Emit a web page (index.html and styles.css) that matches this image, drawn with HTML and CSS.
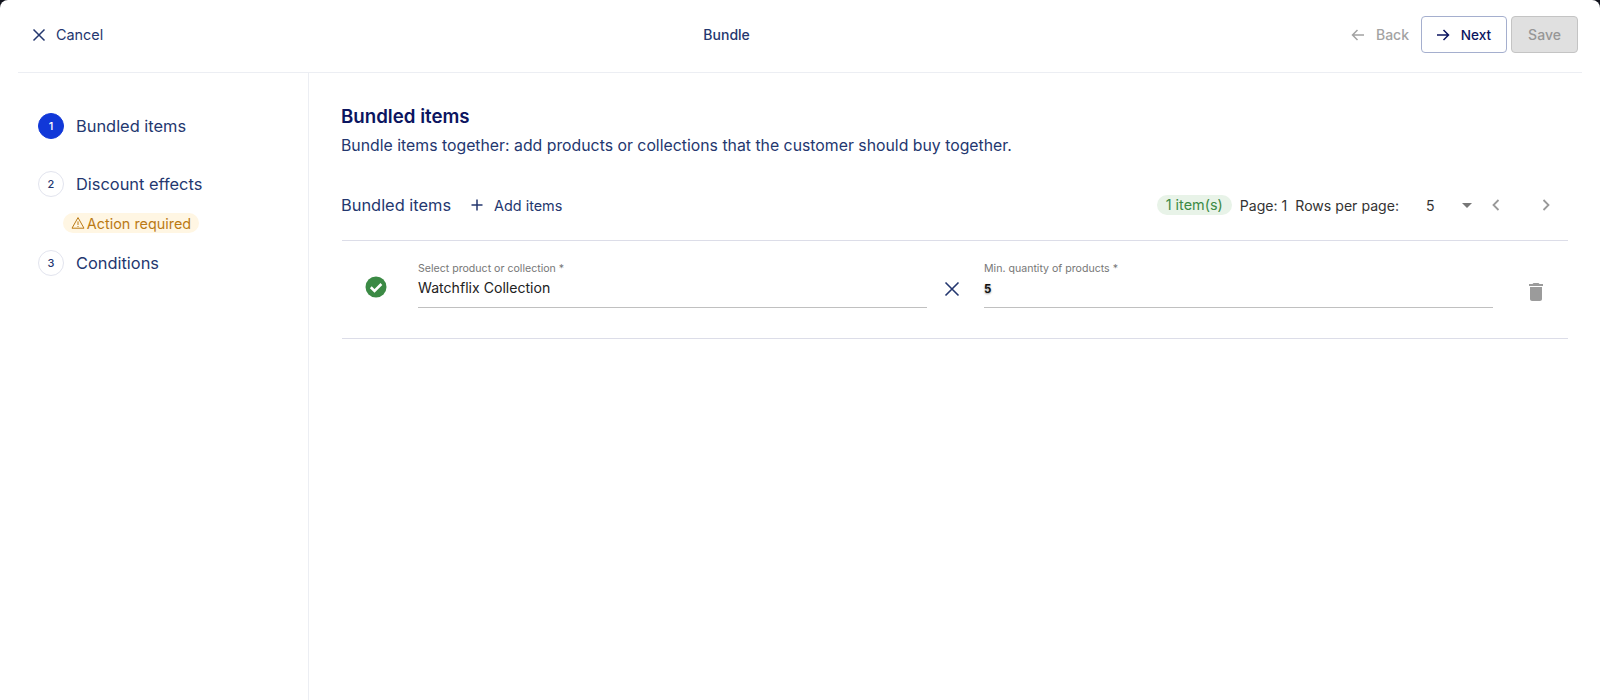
FILE: index.html
```html
<!DOCTYPE html>
<html lang="en">
<head>
  <meta charset="UTF-8">
  <meta name="viewport" content="width=device-width, initial-scale=1.0">
  <title>Bundle</title>
  <link rel="stylesheet" href="styles.css">
</head>
<body>
  <header class="topbar">
    <button class="text-btn cancel-btn">
      <svg class="icon-16" viewBox="0 0 16 16"><path d="M2.5 2.5l11 11M13.5 2.5l-11 11"/></svg>
      Cancel
    </button>
    <div class="topbar-title">Bundle</div>
    <div class="topbar-actions">
      <button class="text-btn back-btn">
        <svg class="icon-16" viewBox="0 0 16 16"><path d="M14 8H2.5M7.5 3l-5 5 5 5"/></svg>
        Back
      </button>
      <button class="next-btn">
        <svg class="icon-16" viewBox="0 0 16 16"><path d="M2 8h11.5M8.5 3l5 5-5 5"/></svg>
        Next
      </button>
      <button class="save-btn">Save</button>
    </div>
  </header>

  <div class="content">
    <nav class="steps">
      <div class="step step-active">
        <span class="step-num">1</span>
        <span class="step-label">Bundled items</span>
      </div>
      <div class="step">
        <span class="step-num">2</span>
        <span class="step-label">Discount effects</span>
      </div>
      <div class="warn-chip">
        <svg class="warn-icon" viewBox="0 0 14 14"><path d="M7 1.6L13 12.2H1z"/><path d="M7 5.4v3.6M7 10v1"/></svg>
        Action required
      </div>
      <div class="step">
        <span class="step-num">3</span>
        <span class="step-label">Conditions</span>
      </div>
    </nav>

    <main class="panel">
      <h2>Bundled items</h2>
      <p class="intro">Bundle items together: add products or collections that the customer should buy together.</p>

      <div class="list-head">
        <span class="list-title">Bundled items</span>
        <button class="text-btn add-btn">
          <svg class="icon-14" viewBox="0 0 14 14"><path d="M7 1.5v11M1.5 7h11"/></svg>
          Add items
        </button>
        <div class="pager">
          <span class="count-chip">1 item(s)</span>
          <span class="page-no">Page: 1</span>
          <span>Rows per page:</span>
          <span class="rows-value">5</span>
          <span class="caret"></span>
          <svg class="chevron chevron-prev" viewBox="0 0 10 14"><path d="M7.5 2L2.5 7l5 5"/></svg>
          <svg class="chevron" viewBox="0 0 10 14"><path d="M2.5 2l5 5-5 5"/></svg>
        </div>
      </div>

      <div class="item-row">
        <svg class="ok-icon" viewBox="0 0 22 22"><circle cx="11" cy="11" r="10.5"/><path d="M5.8 11.3l3.7 3.6L16.4 8"/></svg>
        <div class="field">
          <label>Select product or collection *</label>
          <div class="field-value">Watchflix Collection</div>
        </div>
        <svg class="clear-icon" viewBox="0 0 16 16"><path d="M1.5 1.5l13 13M14.5 1.5l-13 13"/></svg>
        <div class="field">
          <label>Min. quantity of products *</label>
          <div class="field-value"><span class="qty">5</span></div>
        </div>
        <svg class="trash-icon" viewBox="0 0 24 24"><path d="M6 19c0 1.1.9 2 2 2h8c1.1 0 2-.9 2-2V7H6v12zM19 4h-3.5l-1-1h-5l-1 1H5v2h14V4z"/></svg>
      </div>
    </main>
  </div>
</body>
</html>
```

FILE: styles.css
```css
* {
  box-sizing: border-box;
}
html {
  height: 100%;
  background: #11131c;
}
body {
  height: 100%;
  margin: 0;
  background: #fff;
  border-radius: 8px 8px 0 0;
  color: #24376f;
  font-family: Inter, "Liberation Sans", sans-serif;
  font-size: 14px;
  overflow: hidden;
  display: flex;
  flex-direction: column;
}
button {
  font-family: inherit;
  font-size: 14px;
  font-weight: 500;
  cursor: pointer;
}
svg {
  display: block;
  fill: none;
  stroke: currentColor;
  flex: none;
}
.icon-16 {
  width: 16px;
  height: 16px;
  stroke-width: 1.5;
}
.icon-14 {
  width: 14px;
  height: 14px;
  stroke-width: 1.5;
}

.topbar {
  height: 73px;
  flex: none;
  margin: 0 18px;
  padding: 0 4px 3px 13px;
  border-bottom: 1px solid #eceef3;
  display: flex;
  justify-content: space-between;
  align-items: center;
}
.text-btn {
  background: none;
  border: none;
  padding: 0;
  color: #24376f;
  display: flex;
  align-items: center;
}
.cancel-btn {
  gap: 9px;
  font-weight: 400;
  font-size: 14.4px;
}
.topbar-title {
  font-size: 14px;
  font-weight: 500;
}
.topbar-actions {
  display: flex;
  justify-content: flex-end;
  align-items: center;
  gap: 4px;
}
.back-btn {
  color: #a3a3a3;
  gap: 10px;
  margin-right: 8px;
}
.next-btn {
  width: 86px;
  height: 37px;
  padding: 0 2px 0 0;
  background: #fff;
  border: 1px solid #a5afce;
  border-radius: 4px;
  color: #0b1560;
  font-size: 13.6px;
  display: flex;
  align-items: center;
  justify-content: center;
  gap: 10px;
}
.save-btn {
  width: 67px;
  height: 37px;
  padding: 0;
  background: #e0e0e0;
  border: 1px solid #c4c4c4;
  border-radius: 4px;
  color: #969696;
}

.content {
  flex: 1;
  display: flex;
  min-height: 0;
}
.steps {
  width: 309px;
  flex: none;
  border-right: 1px solid #eceef3;
  padding: 40px 0 0 38px;
}
.step {
  display: flex;
  align-items: center;
  gap: 12px;
  height: 26px;
  margin-bottom: 32px;
}
.step-label {
  font-size: 16.4px;
}
.step-num {
  width: 26px;
  height: 26px;
  border-radius: 50%;
  border: 1px solid #e2e4ee;
  display: flex;
  align-items: center;
  justify-content: center;
  font-size: 11px;
  font-weight: 500;
}
.step-active .step-num {
  background: #1138d8;
  border-color: #1138d8;
  color: #fff;
}
.warn-chip {
  width: 136px;
  height: 20px;
  margin: -16px 0 17px 25px;
  border-radius: 10px;
  background: #fff6e3;
  color: #bb7a14;
  font-size: 14.4px;
  display: flex;
  align-items: center;
  justify-content: center;
  gap: 2px;
}
.warn-icon {
  width: 14px;
  height: 14px;
  stroke-width: 1;
}

.panel {
  flex: 1;
  padding: 33px 32px 0;
}
h2 {
  margin: 0;
  font-size: 18.7px;
  font-weight: 600;
  color: #0b1560;
  line-height: 22px;
}
.intro {
  margin: 7px 0 0;
  font-size: 15.82px;
  line-height: 22px;
}
.list-head {
  display: flex;
  align-items: center;
  height: 30px;
  margin-top: 33px;
}
.list-title {
  font-size: 16.4px;
}
.add-btn {
  margin-left: 19px;
  gap: 10px;
  font-size: 14.4px;
  font-weight: 400;
}
.pager {
  margin-left: auto;
  padding-right: 17px;
  display: flex;
  align-items: center;
  color: #333;
  font-size: 14.1px;
}
.count-chip {
  height: 20px;
  padding: 0 9px;
  border-radius: 10px;
  background: #e8f3e8;
  color: #3b8a45;
  font-size: 14.4px;
  line-height: 20px;
  margin-right: 8px;
}
.page-no {
  margin-right: 8px;
}
.rows-value {
  margin-left: 27px;
  width: 36px;
}
.caret {
  width: 0;
  height: 0;
  border-left: 5px solid transparent;
  border-right: 5px solid transparent;
  border-top: 5px solid #777;
}
.chevron {
  width: 10px;
  height: 14px;
  color: #999;
  stroke-width: 1.8;
}
.chevron-prev {
  margin: 0 40px 0 19px;
}

.item-row {
  height: 99px;
  margin-top: 20px;
  margin-left: 1px;
  border-top: 1px solid #dcdde8;
  border-bottom: 1px solid #dcdde8;
  display: flex;
  align-items: flex-start;
}
.ok-icon {
  width: 22px;
  height: 22px;
  margin: 35px 31px 0 23px;
  stroke: none;
}
.ok-icon circle {
  fill: #3b8a45;
}
.ok-icon path {
  fill: none;
  stroke: #fff;
  stroke-width: 2.6;
}
.field {
  flex: none;
  width: 509px;
  height: 46px;
  margin-top: 21px;
  border-bottom: 1px solid #c0c0c0;
}
.field label {
  display: block;
  font-size: 10.6px;
  line-height: 14px;
  color: #777;
}
.field-value {
  font-size: 14.1px;
  line-height: 20px;
  margin-top: 2px;
  color: #222;
}
.qty {
  font-size: 11.5px;
  font-weight: 700;
  color: #111;
  text-shadow: 0 1px 2px #999;
}
.clear-icon {
  width: 16px;
  height: 16px;
  margin: 40px 24px 0 17px;
  color: #24376f;
  stroke-width: 1.6;
}
.trash-icon {
  width: 24px;
  height: 24px;
  margin: 39px 0 0 31px;
  fill: #9b9b9b;
  stroke: none;
}
```
